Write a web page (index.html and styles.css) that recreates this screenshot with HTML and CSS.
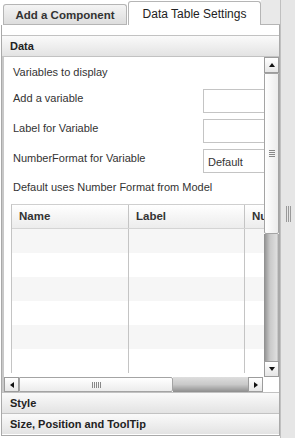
FILE: index.html
```html
<!DOCTYPE html>
<html lang="en">
<head>
    <meta charset="UTF-8">
    <title>Data Table Settings</title>
    <link rel="stylesheet" href="styles.css">
</head>
<body>

<div class="frame">
    <div class="side">
        <!-- Onglets -->
        <div class="tabs">
            <div class="tab">Add a Component</div>
            <div class="tab active">Data Table Settings</div>
            <div class="tab-fill"></div>
        </div>

        <div class="panel">
            <div class="section-head">Data</div>

            <div class="section-body">
                <div class="scroll-row">
                    <div class="viewport">
                        <div class="line title">Variables to display</div>

                        <div class="form-row">
                            <span class="label">Add a variable</span>
                            <div class="field"></div>
                        </div>
                        <div class="form-row">
                            <span class="label">Label for Variable</span>
                            <div class="field"></div>
                        </div>
                        <div class="form-row">
                            <span class="label">NumberFormat for Variable</span>
                            <div class="field select">Default</div>
                        </div>

                        <div class="line hint">Default uses Number Format from Model</div>

                        <div class="grid">
                            <div class="grid-row head">
                                <div class="cell c1">Name</div>
                                <div class="cell c2">Label</div>
                                <div class="cell c3">NumberFormat</div>
                            </div>
                            <div class="grid-row odd"><div class="cell c1"></div><div class="cell c2"></div><div class="cell c3"></div></div>
                            <div class="grid-row"><div class="cell c1"></div><div class="cell c2"></div><div class="cell c3"></div></div>
                            <div class="grid-row odd"><div class="cell c1"></div><div class="cell c2"></div><div class="cell c3"></div></div>
                            <div class="grid-row"><div class="cell c1"></div><div class="cell c2"></div><div class="cell c3"></div></div>
                            <div class="grid-row odd"><div class="cell c1"></div><div class="cell c2"></div><div class="cell c3"></div></div>
                            <div class="grid-row"><div class="cell c1"></div><div class="cell c2"></div><div class="cell c3"></div></div>
                        </div>
                    </div>

                    <!-- Barre verticale -->
                    <div class="vbar">
                        <div class="btn"><span class="arrow up"></span></div>
                        <div class="vthumb"><span class="grip-h"></span></div>
                        <div class="vtrack"></div>
                        <div class="btn"><span class="arrow down"></span></div>
                    </div>
                </div>

                <!-- Barre horizontale -->
                <div class="hbar">
                    <div class="btn"><span class="arrow left"></span></div>
                    <div class="hthumb"><span class="grip-v"></span></div>
                    <div class="htrack"></div>
                    <div class="btn"><span class="arrow right"></span></div>
                    <div class="corner"></div>
                </div>
            </div>

            <div class="section-head">Style</div>
            <div class="section-head">Size, Position and ToolTip</div>
        </div>
    </div>

    <div class="splitter">
        <span class="grip-v tall"></span>
    </div>
</div>

</body>
</html>
```

FILE: styles.css
```css
body {
    margin: 0;
    padding: 0;
    background-color: #fff;
    font-family: 'Liberation Sans', Arial, sans-serif;
    font-size: 11px;
    color: #333;
}

.frame {
    display: flex;
    width: 295px;
    height: 438px;
}

.side {
    width: 280px;
    display: flex;
    flex-direction: column;
}

/* Onglets */
.tabs {
    display: flex;
    align-items: flex-end;
    height: 25px;
    padding-left: 3px;
    box-sizing: border-box;
}

.tab {
    height: 21px;
    width: 124px;
    box-sizing: border-box;
    border: 1px solid #b5b5b5;
    border-bottom: none;
    border-radius: 3px 3px 0 0;
    background: linear-gradient(#f4f4f4, #dcdcdc);
    font-weight: bold;
    font-size: 11.5px;
    color: #333;
    line-height: 20px;
    text-align: center;
    box-shadow: inset 0 -1px 0 #b5b5b5;
}

.tab.active {
    height: 24px;
    width: 133px;
    background: #fff;
    font-weight: normal;
    font-size: 12px;
    color: #222;
    line-height: 24px;
    box-shadow: none;
    margin-left: 1px;
}

.tab-fill {
    flex: 1;
    height: 25px;
    background-color: #e9e9e9;
    border-bottom: 1px solid #b5b5b5;
    box-sizing: border-box;
}

/* Panneau */
.panel {
    flex: 1;
    margin-left: 1px;
    margin-bottom: 2px;
    border: 1px solid #a9a9a9;
    border-top: none;
    padding-top: 10px;
    display: flex;
    flex-direction: column;
}

.section-head {
    height: 20px;
    line-height: 20px;
    padding-left: 8px;
    border-top: 1px solid #c2c2c2;
    background: linear-gradient(#fafafa, #e3e3e3);
    font-weight: bold;
    font-size: 11px;
    color: #222;
}

.section-body {
    border-top: 1px solid #c2c2c2;
    border-left: 2px solid #c8c8c8;
    display: flex;
    flex-direction: column;
}

.scroll-row {
    display: flex;
    height: 320px;
}

.viewport {
    width: 260px;
    overflow: hidden;
    padding-left: 7px;
    box-sizing: border-box;
}

.line {
    padding-left: 2px;
    white-space: nowrap;
}

.title {
    line-height: 30px;
}

.form-row {
    display: flex;
    align-items: flex-start;
    margin-top: 2px;
    margin-bottom: 6px;
    height: 24px;
}

.label {
    flex: none;
    width: 190px;
    padding-left: 2px;
    line-height: 18px;
    white-space: nowrap;
}

.field {
    flex: none;
    width: 80px;
    height: 24px;
    box-sizing: border-box;
    border: 1px solid #c4c4c4;
    background-color: #fff;
    padding-left: 4px;
    line-height: 24px;
    font-size: 11px;
}

.hint {
    line-height: 16px;
    margin-top: 1px;
}

/* Tableau */
.grid {
    margin-top: 9px;
    width: 360px;
    border-top: 1px solid #cfcfcf;
    border-left: 1px solid #c4c4c4;
}

.grid-row {
    display: flex;
    height: 24px;
}

.grid-row.odd {
    background-color: #f6f6f6;
}

.grid-row.head {
    height: 23px;
    background: linear-gradient(#ffffff, #ececec);
    border-bottom: 1px solid #d4d4d4;
    font-weight: bold;
    font-size: 11.5px;
    color: #333;
}

.cell {
    border-right: 1px solid #c4c4c4;
    box-sizing: border-box;
    padding-left: 7px;
    line-height: 23px;
    white-space: nowrap;
    overflow: hidden;
}

.c1 { width: 117px; }
.c2 { width: 116px; }
.c3 { width: 120px; }

/* Barres de defilement */
.vbar {
    width: 15px;
    display: flex;
    flex-direction: column;
}

.btn {
    width: 15px;
    height: 16px;
    box-sizing: border-box;
    border: 1px solid #9c9c9c;
    background: linear-gradient(#ffffff, #e6e6e6);
    display: flex;
    align-items: center;
    justify-content: center;
    flex: none;
}

.vthumb {
    height: 161px;
    box-sizing: border-box;
    border: 1px solid #a4a4a4;
    border-radius: 0 0 2px 2px;
    background: linear-gradient(90deg, #ffffff, #ececec);
    display: flex;
    align-items: center;
    justify-content: center;
}

.vtrack {
    flex: 1;
    background: linear-gradient(90deg, #8d8d8d, #c9c9c9 40%, #dedede 85%, #9a9a9a);
}

.hbar {
    display: flex;
    height: 15px;
}

.hbar .btn {
    height: 15px;
}

.hthumb {
    width: 154px;
    box-sizing: border-box;
    border: 1px solid #a4a4a4;
    border-radius: 0 2px 2px 0;
    background: linear-gradient(#ffffff, #ececec);
    display: flex;
    align-items: center;
    justify-content: center;
}

.htrack {
    flex: 1;
    background: linear-gradient(#dedede, #c9c9c9 50%, #8d8d8d);
}

.corner {
    width: 16px;
    background-color: #fff;
}

.arrow {
    width: 0;
    height: 0;
    border: 3px solid transparent;
}

.arrow.up { border-bottom: 4px solid #111; border-top: none; }
.arrow.down { border-top: 4px solid #111; border-bottom: none; }
.arrow.left { border-right: 4px solid #111; border-left: none; }
.arrow.right { border-left: 4px solid #111; border-right: none; }

.grip-h {
    width: 6px;
    height: 7px;
    background: repeating-linear-gradient(#888 0 1px, transparent 1px 2px);
}

.grip-v {
    width: 9px;
    height: 6px;
    background: repeating-linear-gradient(90deg, #888 0 1px, transparent 1px 2px);
}

/* Separateur */
.splitter {
    width: 15px;
    background-color: #e6e6e6;
    border-left: 1px solid #c0c0c0;
    box-sizing: border-box;
    display: flex;
    align-items: flex-start;
    justify-content: center;
}

.grip-v.tall {
    width: 5px;
    height: 16px;
    margin-top: 206px;
    background: repeating-linear-gradient(90deg, #999 0 1px, transparent 1px 2px);
}
```
